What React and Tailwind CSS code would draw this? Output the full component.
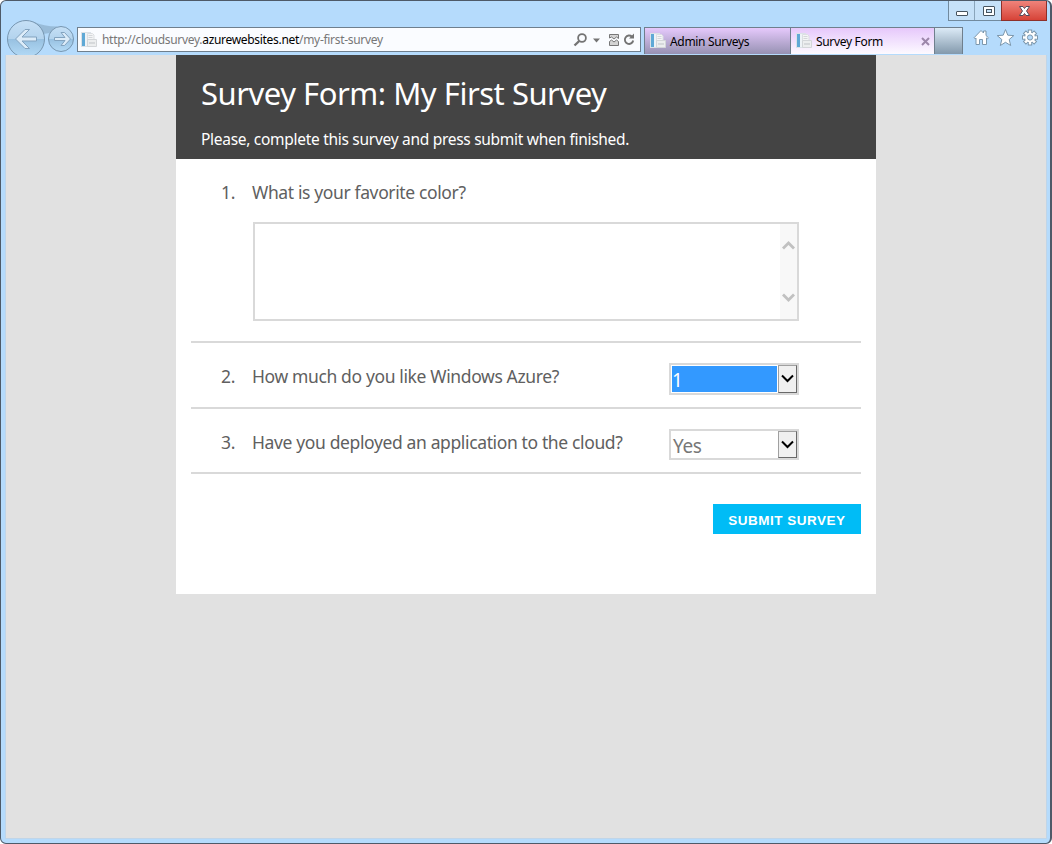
const ui = "font-['Noto_Sans',sans-serif]";

function PageIcon() {
  return (
    <svg width="16" height="16" viewBox="0 0 16 16" className="shrink-0">
      <rect x="0.5" y="0.5" width="9" height="14" fill="#eef3f7" stroke="#dbe2e8" />
      <rect x="1" y="1" width="3" height="13" fill="#5fa9d6" />
      <path d="M6.500 1.500h5l1.500 1.500v5h-6.500z" fill="#f4f5f6" stroke="#dcdfe2" />
      <path d="M7.500 3.500h4M7.500 5.500h4" stroke="#d4d7da" />
      <path d="M6.500 7.500h9v7h-9z" fill="#eceeef" stroke="#d3d6d9" />
      <path d="M8 11h6" stroke="#bfc3c7" />
    </svg>
  );
}

function NavButtons() {
  return (
    <svg width="72" height="35" viewBox="0 0 72 35" className="-mt-px shrink-0">
      <defs>
        <linearGradient id="disc" x1="0" y1="0" x2="0" y2="1">
          <stop offset="0" stopColor="#c6e0f6" />
          <stop offset="0.5" stopColor="#b3d3ed" />
          <stop offset="0.51" stopColor="#98c1e1" />
          <stop offset="1" stopColor="#b4dbf7" />
        </linearGradient>
      </defs>
      <path d="M27 1.500 Q38 6.500 51 6.500 L44 13 L37 14Z" fill="#98bbd8" />
      <circle cx="20" cy="19" r="18.500" fill="url(#disc)" stroke="#7796b0" />
      <circle cx="55" cy="19" r="12.500" fill="url(#disc)" stroke="#7796b0" />
      <path d="M19 9.500h4.500l-7.500 7.500h14.500v4h-14.500l7.500 7.500h-4.500l-9.500-9.500z" fill="#dcecf9" stroke="#83a3bf" strokeLinejoin="round" />
      <path d="M55 12.500h3.500l6 6.500-6 6.500h-3.500l4-5h-10.500v-3h10.500z" fill="#dcecf9" stroke="#83a3bf" strokeLinejoin="round" />
    </svg>
  );
}

function AddressTools() {
  return (
    <svg width="68" height="20" viewBox="0 0 68 20" className="shrink-0">
      <circle cx="10" cy="8" r="3.900" fill="none" stroke="#747474" strokeWidth="1.800" />
      <path d="M7.200 11 2.500 15.500" stroke="#747474" strokeWidth="2.400" />
      <path d="M21 8.500h7l-3.500 4z" fill="#747474" />
      <path d="M37.500 8V4.500h9v4l-2-1.500-2.500 2-2.500-2z" fill="#d4d4d4" stroke="#777" />
      <path d="M37.500 15.500v-4l2-1.500 2.500 2 2.500-2 2 1.500v4z" fill="#d4d4d4" stroke="#777" />
      <path d="M60 6.700A4.200 4.200 0 1 0 61.200 10.500" fill="none" stroke="#747474" strokeWidth="1.900" />
      <path d="M57 8.500H62V3.500z" fill="#747474" />
    </svg>
  );
}

function ToolIcons() {
  const teeth = [0, 45, 90, 135, 180, 225, 270, 315];
  return (
    <svg width="70" height="20" viewBox="0 0 70 20" className="mt-[3px] ml-2.5 shrink-0">
      <path d="M1 9.800 8 2.500l2.500 2.500V3h2.500v4.500l2.500 2.300-1 1-1-.8v6.500H9.500v-5h-3v5H3V10l-1 .8z" fill="#fff" stroke="#7c97ac" />
      <path d="m32.500 1.500 2.300 5.700 6 .4-4.600 3.900 1.500 6-5.200-3.200-5.200 3.200 1.500-6-4.600-3.900 6-.4z" fill="#fff" stroke="#7c97ac" />
      <g fill="#fff" stroke="#7c97ac">
        {teeth.map((a) => (
          <rect key={a} x="55.300" y="2" width="3.400" height="4" transform={`rotate(${a} 57 9.500)`} />
        ))}
        <circle cx="57" cy="9.500" r="5.400" />
      </g>
      {teeth.map((a) => (
        <rect key={a} x="55.900" y="3" width="2.200" height="3" fill="#fff" transform={`rotate(${a} 57 9.500)`} />
      ))}
      <circle cx="57" cy="9.500" r="2.600" fill="#b5dbfc" stroke="#7c97ac" />
    </svg>
  );
}

function WindowButtons() {
  return (
    <div className="flex h-5 border border-t-0 border-[#718a9e] bg-[#c6e1f8]">
      <div className="w-[26px] border-r border-[#8aa5bb]">
        <svg width="26" height="19"><rect x="7.500" y="10.500" width="11" height="4" rx="0.500" fill="#fff" stroke="#47545f" /></svg>
      </div>
      <div className="w-[26px]">
        <svg width="26" height="19">
          <rect x="8.500" y="5.500" width="11" height="9" rx="0.500" fill="#fff" stroke="#47545f" />
          <rect x="11.500" y="8.500" width="5" height="3" fill="#c6e1f8" stroke="#47545f" />
        </svg>
      </div>
      <div className="-mr-px h-5 w-[46px] border border-t-0 border-[#8d302a] bg-linear-to-b from-[#ef837b] to-[#d64237]">
        <svg width="44" height="19">
          <path d="M17.500 5.500h3.500l1.500 2 1.500-2h3.500l-3 4.500 3 4.500H24l-1.500-2-1.500 2h-3.500l3-4.500z" fill="#fff" stroke="#554b5b" />
        </svg>
      </div>
    </div>
  );
}

function Select({ value, active }) {
  return (
    <div className={`mt-5 flex w-[130px] border-2 border-[#d9d9d9] bg-white ${active ? "h-8" : "h-[31px]"}`}>
      <div className={`my-px ml-px flex w-[105px] items-center pt-[3px] text-[19px] leading-none tracking-[-0.400px] ${active ? "bg-[#3399ff] text-white" : "pl-px text-[#777]"}`}>
        {value}
      </div>
      <div className="ml-px w-[19px] border border-t-[#a0a0a0] border-r-[#696969] border-b-[#696969] border-l-[#a0a0a0] bg-[#f0f0f0]">
        <svg width="17" height="26" viewBox="0 0 17 26"><path d="m3 9.500 5.500 5.500L14 9.500" fill="none" stroke="#000" strokeWidth="2" /></svg>
      </div>
    </div>
  );
}

function Question({ n, children, className }) {
  return (
    <div className={`flex text-[17.500px] leading-6 tracking-[-0.370px] whitespace-nowrap text-[#606060] ${className}`}>
      <span className="w-[31px]">{n}.</span>
      {children}
    </div>
  );
}

export default function App() {
  return (
    <div className={`h-[844px] w-[1052px] overflow-hidden bg-white ${ui}`}>
      <div className="flex h-[844px] flex-col rounded-md border border-r-2 border-[#4e5a68] bg-[#b5dbfc]">
        <div className="flex h-5 shrink-0 justify-end pr-[3px]">
          <WindowButtons />
        </div>
        <div className="flex h-[34px] shrink-0 items-start pl-[5px]">
          <NavButtons />
          <div className="mt-1.5 -ml-px flex h-[25px] w-[564px] shrink-0 items-center border border-[#6f7f8d] bg-[#fafcff] pl-[3px]">
            <PageIcon />
            <div className="ml-[5px] flex-1 text-[12px] tracking-[-0.310px] whitespace-nowrap text-[#777]">
              <span>http://cloudsurvey.</span>
              <span className="text-black">azurewebsites.net</span>
              <span>/my-first-survey</span>
            </div>
            <AddressTools />
          </div>
          <div className="mt-1.5 ml-[3px] flex h-[27px] shrink-0 text-[12px] tracking-[-0.320px] text-black">
            <div className="flex w-[147px] items-center border border-b-0 border-[#6f7f8d] bg-linear-to-b from-[#e6c9fc] to-[#9792b3] pl-[5px]">
              <PageIcon />
              <span className="ml-1 pt-0.5">Admin Surveys</span>
            </div>
            <div className="flex w-[144px] items-center border-t border-r border-[#6f7f8d] bg-linear-to-b from-[#e6c8fb] to-[#fdfaff] pl-[5px]">
              <PageIcon />
              <span className="ml-1 flex-1 pt-0.5">Survey Form</span>
              <svg width="9" height="9" className="mr-1"><path d="m1 1 7 7M8 1 1 8" stroke="#9c86aa" strokeWidth="2" /></svg>
            </div>
            <div className="w-7 border-t border-r border-[#6f7f8d] bg-linear-to-b from-[#dcebf7] to-[#8399ac]" />
          </div>
          <div className="pt-1"><ToolIcons /></div>
        </div>
        <div className="mr-[3px] ml-1 h-[784px] shrink-0 border-x border-b border-[#c0d5e8] bg-[#e1e1e1]">
          <main className="ml-[170px] h-[539px] w-[700px] bg-white">
            <header className="h-[104px] bg-[#444] pl-[25px] text-white">
              <h1 className="pt-[17px] text-[31px] leading-[42px] tracking-[-0.480px] whitespace-nowrap">Survey Form: My First Survey</h1>
              <p className="pt-[13px] text-[15.500px] leading-6 tracking-[-0.290px] whitespace-nowrap">Please, complete this survey and press submit when finished.</p>
            </header>
            <div className="px-[15px]">
              <section className="h-[184px] border-b-2 border-[#d9d9d9] pt-[21px] pl-[30px]">
                <Question n="1"><span>What is your favorite color?</span></Question>
                <div className="mt-[18px] ml-8 flex h-[99px] w-[546px] justify-end border-2 border-[#d9d9d9]">
                  <div className="w-[17px] bg-[#f8f8f8]">
                    <svg width="17" height="95" fill="none" stroke="#c1c1c1" strokeWidth="2.800"><path d="m3 24.500 5.500-5.500L14 24.500M3 70.500 8.500 76l5.500-5.500" /></svg>
                  </div>
                </div>
              </section>
              <section className="flex h-[66px] justify-between border-b-2 border-[#d9d9d9] pr-[62px] pl-[30px]">
                <Question n="2" className="pt-[21px]"><span>How much do you like Windows Azure?</span></Question>
                <Select value="1" active />
              </section>
              <section className="flex h-[65px] justify-between border-b-2 border-[#d9d9d9] pr-[62px] pl-[30px]">
                <Question n="3" className="pt-[21px]"><span>Have you deployed an application to the cloud?</span></Question>
                <Select value="Yes" />
              </section>
              <button className="mt-[30px] ml-auto flex h-[30px] w-[148px] items-center justify-center bg-[#00bcf6] pt-1 font-['Liberation_Sans',sans-serif] text-[13.500px] font-bold tracking-[0.500px] whitespace-nowrap text-white">SUBMIT SURVEY</button>
            </div>
          </main>
        </div>
      </div>
    </div>
  );
}
